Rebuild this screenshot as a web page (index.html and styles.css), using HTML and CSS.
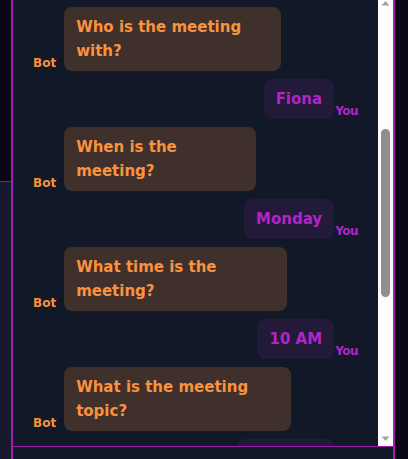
FILE: index.html
```html
<!DOCTYPE html>
<html lang="en">
<head>
<meta charset="utf-8">
<title>Meeting Scheduler</title>
<link rel="stylesheet" href="styles.css">
</head>
<body>
<div class="app">
  <aside class="rail">
    <div class="rail-top"></div>
    <div class="rail-bottom"></div>
  </aside>
  <main class="panel">
    <div class="chat-frame">
      <section class="chat">
        <div class="thread">
          <div class="msg bot"><span class="who">Bot</span><div class="bubble">Hi! I can help you schedule a meeting.</div></div>
          <div class="msg user"><div class="bubble">Hello</div><span class="who">You</span></div>
          <div class="msg bot"><span class="who">Bot</span><div class="bubble">Please answer a few quick questions.</div></div>
          <div class="msg user"><div class="bubble">Sure</div><span class="who">You</span></div>
          <div class="msg bot"><span class="who">Bot</span><div class="bubble">Let's set up your new meeting.</div></div>
          <div class="msg bot" data-anchor><span class="who">Bot</span><div class="bubble">Who is the meeting with?</div></div>
          <div class="msg user"><div class="bubble">Fiona</div><span class="who">You</span></div>
          <div class="msg bot"><span class="who">Bot</span><div class="bubble">When is the meeting?</div></div>
          <div class="msg user"><div class="bubble">Monday</div><span class="who">You</span></div>
          <div class="msg bot"><span class="who">Bot</span><div class="bubble">What time is the meeting?</div></div>
          <div class="msg user"><div class="bubble">10 AM</div><span class="who">You</span></div>
          <div class="msg bot"><span class="who">Bot</span><div class="bubble">What is the meeting topic?</div></div>
          <div class="msg user"><div class="bubble">Strategy</div><span class="who">You</span></div>
          <div class="msg bot"><span class="who">Bot</span><div class="bubble">Thanks! Here is a summary.</div></div>
          <div class="msg bot"><span class="who">Bot</span><div class="bubble">Shall I book it?</div></div>
          <div class="msg user"><div class="bubble">Yes</div><span class="who">You</span></div>
          <div class="msg bot"><span class="who">Bot</span><div class="bubble">Your meeting is booked!</div></div>
          <div class="msg user"><div class="bubble">Thanks</div><span class="who">You</span></div>
        </div>
      </section>
      <div class="scrollbar" aria-hidden="true">
        <div class="sb-btn">
          <svg width="15" height="15" viewBox="0 0 15 15"><path d="M3.5 9.5 L7.5 5 L11.5 9.5 Z" fill="#a3a3a3"/></svg>
        </div>
        <div class="sb-track">
          <div class="sb-thumb"></div>
        </div>
        <div class="sb-btn">
          <svg width="15" height="15" viewBox="0 0 15 15"><path d="M3.5 5.5 L7.5 10 L11.5 5.5 Z" fill="#a3a3a3"/></svg>
        </div>
      </div>
    </div>
    <form class="composer">
      <input class="field" type="text" aria-label="Your answer">
    </form>
  </main>
  <div class="edge"></div>
</div>
<script src="script.js"></script>
</body>
</html>
```

FILE: styles.css
```css
* { box-sizing: border-box; }

html, body {
  margin: 0;
  height: 100%;
}

body {
  background: #0c0717;
  font-family: "DejaVu Sans", sans-serif;
  overflow: hidden;
}

.app {
  display: flex;
  height: 459px;
}

.rail {
  width: 11px;
  flex: none;
  display: flex;
  flex-direction: column;
}

.rail-top {
  height: 182px;
  background: #0c0717;
  border-bottom: 1px solid #4b4553;
}

.rail-bottom {
  flex: 1;
  background: #16182d;
}

.panel {
  width: 384px;
  flex: none;
  display: flex;
  flex-direction: column;
  background: #111827;
  border-left: 2px solid #a21caf;
  border-right: 2px solid #a21caf;
  overflow: hidden;
}

.chat-frame {
  flex: none;
  display: flex;
  height: 451px;
  margin-top: -4px;
  border-bottom: 1px solid #a21caf;
}

.chat {
  flex: 1;
  min-width: 0;
  overflow-y: scroll;
  scrollbar-width: none;
}

.chat::-webkit-scrollbar {
  display: none;
}

.scrollbar {
  width: 15px;
  flex: none;
  display: flex;
  flex-direction: column;
  background: #fdfdfd;
}

.sb-btn {
  height: 15px;
  flex: none;
}

.sb-btn svg {
  display: block;
}

.sb-track {
  flex: 1;
  padding: 118px 3px 0;
}

.sb-thumb {
  height: 168px;
  background: #8f8f8f;
  border-radius: 5px;
}

.thread {
  display: flex;
  flex-direction: column;
  gap: 8px;
  padding: 8px 20px;
}

.msg {
  display: flex;
  align-items: flex-end;
}

.msg.bot {
  align-self: flex-start;
  gap: 8px;
}

.msg.user {
  align-self: flex-end;
  gap: 1px;
}

.who {
  flex: none;
  font-size: 12px;
  line-height: 16px;
  font-weight: 700;
}

.bot .who { color: #fb923c; }
.user .who { color: #b324c6; letter-spacing: -0.5px; }

.bubble {
  max-width: 80%;
  padding: 8px 12px;
  border-radius: 8px;
  font-size: 15px;
  line-height: 24px;
  font-weight: 700;
}

.bot .bubble {
  background: rgba(251, 146, 60, 0.2);
  color: #fb923c;
}

.user .bubble {
  background: rgba(192, 38, 211, 0.1);
  color: #b324c6;
}

.composer {
  display: flex;
  padding: 16px 20px;
}

.field {
  flex: 1;
  height: 40px;
  border: 1px solid #a21caf;
  border-radius: 8px;
  background: #111827;
  color: #e5e7eb;
  padding: 0 12px;
  font: inherit;
}

.edge {
  flex: 1;
  background: #0c0717;
}
```

FILE: script.js
```js
const chat = document.querySelector('.chat');
const anchor = chat.querySelector('[data-anchor]');
chat.scrollTop += anchor.getBoundingClientRect().top - 7;
```
